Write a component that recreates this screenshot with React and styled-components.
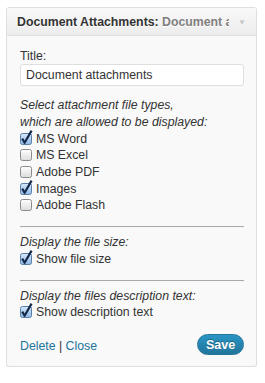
import React from "react";
import styled, { createGlobalStyle } from "styled-components";

const GlobalStyle = createGlobalStyle`
  body {
    margin: 0;
    background: #ffffff;
    font-family: "Liberation Sans", Arial, sans-serif;
    color: #333333;
  }
`;

const fileTypes = [
  { label: "MS Word", checked: true },
  { label: "MS Excel", checked: false },
  { label: "Adobe PDF", checked: false },
  { label: "Images", checked: true },
  { label: "Adobe Flash", checked: false },
];

function CheckBox({ checked }) {
  const id = checked ? "cbOn" : "cbOff";
  return (
    <BoxIcon width="14" height="16" viewBox="0 0 14 16">
      <defs>
        <linearGradient id={id} x1="0" y1="0" x2="0" y2="1">
          <stop offset="0" stopColor={checked ? "#d6e8fb" : "#ffffff"} />
          <stop offset="1" stopColor={checked ? "#8fb9e6" : "#dcdcdc"} />
        </linearGradient>
      </defs>
      <rect
        x="0.5"
        y="3.5"
        width="11"
        height="11"
        rx="2"
        fill={`url(#${id})`}
        stroke={checked ? "#5a7ea8" : "#8c8c8c"}
      />
      {checked && (
        <path
          d="M2.2 8.6 L4.6 12.8 L11.6 0.6"
          fill="none"
          stroke="#152a4a"
          strokeWidth="2.2"
          strokeLinejoin="round"
        />
      )}
    </BoxIcon>
  );
}

function Option({ label, checked }) {
  return (
    <OptionRow>
      <CheckBox checked={checked} />
      <span>{label}</span>
    </OptionRow>
  );
}

export default function App() {
  return (
    <>
      <GlobalStyle />
      <Page>
        <Widget>
          <Header>
            <HeaderTitle>
              Document Attachments: <HeaderSub>Document attachments</HeaderSub>
            </HeaderTitle>
            <Arrow>▼</Arrow>
          </Header>
          <Body>
            <Label>Title:</Label>
            <TextInput>Document attachments</TextInput>

            <Hint>
              Select attachment file types,
              <br />
              which are allowed to be displayed:
            </Hint>
            {fileTypes.map((t) => (
              <Option key={t.label} label={t.label} checked={t.checked} />
            ))}

            <Divider />
            <Hint>Display the file size:</Hint>
            <Option label="Show file size" checked />

            <Divider />
            <Hint>Display the files description text:</Hint>
            <Option label="Show description text" checked />

            <Footer>
              <Links>
                <Link>Delete</Link> | <Link>Close</Link>
              </Links>
              <SaveBtn>Save</SaveBtn>
            </Footer>
          </Body>
        </Widget>
      </Page>
    </>
  );
}

const Page = styled.div`
  padding: 7px 8px 0 6px;
`;

const Widget = styled.div`
  width: 251px;
  box-sizing: border-box;
  border: 1px solid #dfdfdf;
  border-radius: 3px;
  overflow: hidden;
  background: #f9f9f9;
  box-shadow: 0 1px 0 #f0f0f0;
`;

const Header = styled.div`
  height: 27px;
  display: flex;
  align-items: center;
  padding: 1px 10px 0 10px;
  box-sizing: border-box;
  height: 28px;
  background: linear-gradient(to bottom, #f9f9f9, #ececec);
  border-bottom: 1px solid #dfdfdf;
`;

const HeaderTitle = styled.div`
  flex: 1;
  min-width: 0;
  overflow: hidden;
  white-space: nowrap;
  font-size: 12.3px;
  font-weight: bold;
  color: #333333;
  text-shadow: 0 1px 0 #ffffff;
`;

const HeaderSub = styled.span`
  color: #808080;
`;

const Arrow = styled.span`
  margin-left: 9px;
  font-size: 8px;
  color: #c4c4c4;
  text-shadow: 0 1px 0 #ffffff;
`;

const Body = styled.div`
  padding: 12px 12px 11px 13px;
  font-size: 12.3px;
  line-height: 17px;
`;

const Label = styled.div`
  line-height: 16px;
  color: #333333;
`;

const TextInput = styled.div`
  height: 22px;
  box-sizing: border-box;
  padding: 0 5px;
  display: flex;
  align-items: center;
  background: #ffffff;
  border: 1px solid #dfdfdf;
  border-radius: 3px;
  color: #333333;
  margin-bottom: 11px;
`;

const Hint = styled.div`
  font-style: italic;
  color: #333333;
`;

const OptionRow = styled.div`
  display: flex;
  align-items: center;
  height: 16.6px;
  gap: 2px;
`;

const BoxIcon = styled.svg`
  flex: none;
  margin-top: -3px;
`;

const Divider = styled.div`
  height: 0;
  border-top: 1px solid #a8a8a8;
  border-bottom: 1px solid #f6f6f6;
  margin: 12px 0 6px;
`;

const Footer = styled.div`
  margin-top: 13px;
  display: flex;
  align-items: center;
  justify-content: space-between;
`;

const Links = styled.div`
  color: #333333;
  padding-top: 4px;
`;

const Link = styled.a`
  color: #21759b;
  text-decoration: none;
`;

const SaveBtn = styled.button`
  height: 21px;
  width: 47px;
  padding: 0;
  border: 1px solid #21759b;
  border-radius: 11px;
  background: linear-gradient(to bottom, #2a95c5, #21759b);
  color: #ffffff;
  font-family: "Liberation Sans", Arial, sans-serif;
  font-size: 12.5px;
  font-weight: bold;
  text-shadow: 0 -1px 0 rgba(0, 0, 0, 0.3);
`;
